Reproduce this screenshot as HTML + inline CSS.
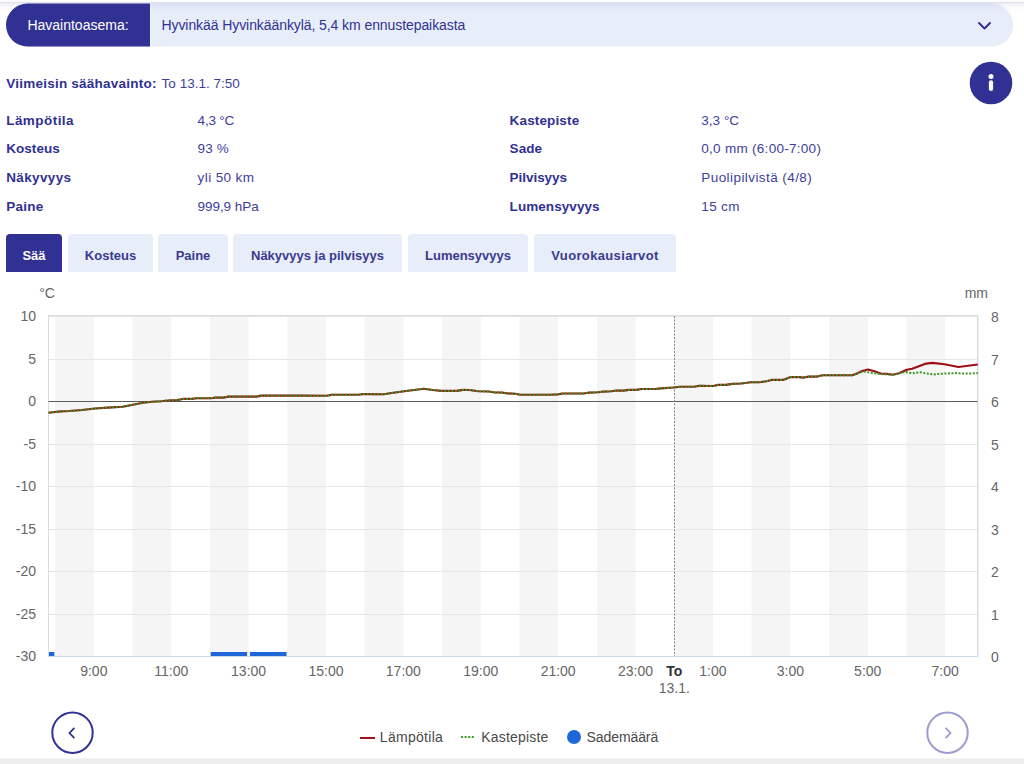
<!DOCTYPE html>
<html><head><meta charset="utf-8">
<style>
html,body{margin:0;padding:0;}
body{width:1024px;height:764px;overflow:hidden;position:relative;background:#fff;font-family:"Liberation Sans", sans-serif;}
.t{position:absolute;white-space:nowrap;}
.a{position:absolute;}
</style></head><body>
<svg class="a" style="left:0;top:0" width="1024" height="50" viewBox="0 0 1024 50"><rect x="6" y="3.6" width="1007.2" height="42.9" rx="21.45" fill="#e8eef9"/><path d="M150 3.6 H27.45 A21.45 21.45 0 0 0 27.45 46.5 H150 Z" fill="#303193"/><rect x="150" y="3.6" width="1" height="42.9" fill="#f4f6fb"/></svg>
<div class="t" style="left:27.40px;top:15.25px;font-size:14px;line-height:20px;font-weight:normal;color:#ffffff;">Havaintoasema:</div>
<div class="t" style="left:161.50px;top:15.25px;font-size:14px;line-height:20px;font-weight:normal;color:#303193;letter-spacing:-0.08px;">Hyvinkää Hyvinkäänkylä, 5,4 km ennustepaikasta</div>
<svg class="a" style="left:974px;top:15.8px" width="22" height="20" viewBox="0 0 22 20"><path d="M5 7 L10.5 12.5 L16 7" fill="none" stroke="#303193" stroke-width="2" stroke-linecap="round" stroke-linejoin="round"/></svg>
<div class="a" style="left:0;top:0;width:1024px;height:14px;background:linear-gradient(to bottom,rgba(60,60,140,0.012) 0px,rgba(60,60,140,0.012) 2px,rgba(60,60,140,0.17) 2px,rgba(60,60,140,0.12) 3px,rgba(60,60,140,0.075) 4px,rgba(60,60,140,0.045) 6px,rgba(60,60,140,0.02) 8px,rgba(60,60,140,0) 13px);"></div>
<svg class="a" style="left:965px;top:57px" width="52" height="52" viewBox="0 0 52 52"><circle cx="26" cy="26" r="21.3" fill="#303193"/><circle cx="26" cy="19.4" r="2.5" fill="#fff"/><line x1="26" y1="25.3" x2="26" y2="31.9" stroke="#fff" stroke-width="4.2" stroke-linecap="round"/></svg>
<div class="t" style="left:6.20px;top:74.12px;font-size:13.5px;line-height:19px;font-weight:bold;color:#303193;letter-spacing:0.24px;">Viimeisin säähavainto:</div>
<div class="t" style="left:161.60px;top:74.12px;font-size:13.5px;line-height:19px;font-weight:normal;color:#3e3e9c;letter-spacing:0.018px;">To 13.1. 7:50</div>
<div class="t" style="left:6.20px;top:110.82px;font-size:13.5px;line-height:19px;font-weight:bold;color:#303193;letter-spacing:0.449px;">Lämpötila</div>
<div class="t" style="left:197.60px;top:110.82px;font-size:13.5px;line-height:19px;font-weight:normal;color:#3e3e9c;letter-spacing:-0.195px;">4,3 °C</div>
<div class="t" style="left:509.60px;top:110.82px;font-size:13.5px;line-height:19px;font-weight:bold;color:#303193;letter-spacing:0.142px;">Kastepiste</div>
<div class="t" style="left:701.30px;top:110.82px;font-size:13.5px;line-height:19px;font-weight:normal;color:#3e3e9c;letter-spacing:0.022px;">3,3 °C</div>
<div class="t" style="left:6.20px;top:139.45px;font-size:13.5px;line-height:19px;font-weight:bold;color:#303193;letter-spacing:0.049px;">Kosteus</div>
<div class="t" style="left:197.60px;top:139.45px;font-size:13.5px;line-height:19px;font-weight:normal;color:#3e3e9c;letter-spacing:0.157px;">93 %</div>
<div class="t" style="left:509.60px;top:139.45px;font-size:13.5px;line-height:19px;font-weight:bold;color:#303193;letter-spacing:0.057px;">Sade</div>
<div class="t" style="left:701.30px;top:139.45px;font-size:13.5px;line-height:19px;font-weight:normal;color:#3e3e9c;letter-spacing:0.283px;">0,0 mm (6:00-7:00)</div>
<div class="t" style="left:6.20px;top:168.08px;font-size:13.5px;line-height:19px;font-weight:bold;color:#303193;letter-spacing:0.374px;">Näkyvyys</div>
<div class="t" style="left:197.60px;top:168.08px;font-size:13.5px;line-height:19px;font-weight:normal;color:#3e3e9c;letter-spacing:0.393px;">yli 50 km</div>
<div class="t" style="left:509.60px;top:168.08px;font-size:13.5px;line-height:19px;font-weight:bold;color:#303193;letter-spacing:-0.044px;">Pilvisyys</div>
<div class="t" style="left:701.30px;top:168.08px;font-size:13.5px;line-height:19px;font-weight:normal;color:#3e3e9c;letter-spacing:0.427px;">Puolipilvistä (4/8)</div>
<div class="t" style="left:6.20px;top:196.71px;font-size:13.5px;line-height:19px;font-weight:bold;color:#303193;letter-spacing:0.256px;">Paine</div>
<div class="t" style="left:197.60px;top:196.71px;font-size:13.5px;line-height:19px;font-weight:normal;color:#3e3e9c;letter-spacing:-0.061px;">999,9 hPa</div>
<div class="t" style="left:509.60px;top:196.71px;font-size:13.5px;line-height:19px;font-weight:bold;color:#303193;letter-spacing:0.064px;">Lumensyvyys</div>
<div class="t" style="left:701.30px;top:196.71px;font-size:13.5px;line-height:19px;font-weight:normal;color:#3e3e9c;letter-spacing:0.348px;">15 cm</div>
<div class="a" style="left:6px;top:234px;width:56px;height:38px;border-radius:4px 4px 0 0;background:#303193;"></div>
<div class="t" style="left:-266.00px;width:600px;text-align:center;top:246.90px;font-size:13px;line-height:18px;font-weight:bold;color:#ffffff;">Sää</div>
<div class="a" style="left:68px;top:234px;width:85px;height:38px;border-radius:4px 4px 0 0;background:#e8eef9;"></div>
<div class="t" style="left:-189.50px;width:600px;text-align:center;top:246.90px;font-size:13px;line-height:18px;font-weight:bold;color:#3a3a8f;">Kosteus</div>
<div class="a" style="left:158px;top:234px;width:70px;height:38px;border-radius:4px 4px 0 0;background:#e8eef9;"></div>
<div class="t" style="left:-107.00px;width:600px;text-align:center;top:246.90px;font-size:13px;line-height:18px;font-weight:bold;color:#3a3a8f;">Paine</div>
<div class="a" style="left:233px;top:234px;width:169px;height:38px;border-radius:4px 4px 0 0;background:#e8eef9;"></div>
<div class="t" style="left:17.50px;width:600px;text-align:center;top:246.90px;font-size:13px;line-height:18px;font-weight:bold;color:#3a3a8f;">Näkyvyys ja pilvisyys</div>
<div class="a" style="left:408px;top:234px;width:120px;height:38px;border-radius:4px 4px 0 0;background:#e8eef9;"></div>
<div class="t" style="left:168.00px;width:600px;text-align:center;top:246.90px;font-size:13px;line-height:18px;font-weight:bold;color:#3a3a8f;">Lumensyvyys</div>
<div class="a" style="left:534px;top:234px;width:142px;height:38px;border-radius:4px 4px 0 0;background:#e8eef9;"></div>
<div class="t" style="left:305.00px;width:600px;text-align:center;top:246.90px;font-size:13px;line-height:18px;font-weight:bold;color:#3a3a8f;letter-spacing:0.35px;">Vuorokausiarvot</div>
<svg class="a" style="left:0;top:0" width="1024" height="764" viewBox="0 0 1024 764"><rect x="55.10" y="316" width="38.70" height="340" fill="#f5f5f5"/><rect x="132.49" y="316" width="38.70" height="340" fill="#f5f5f5"/><rect x="209.89" y="316" width="38.70" height="340" fill="#f5f5f5"/><rect x="287.28" y="316" width="38.70" height="340" fill="#f5f5f5"/><rect x="364.68" y="316" width="38.70" height="340" fill="#f5f5f5"/><rect x="442.07" y="316" width="38.70" height="340" fill="#f5f5f5"/><rect x="519.46" y="316" width="38.70" height="340" fill="#f5f5f5"/><rect x="596.86" y="316" width="38.70" height="340" fill="#f5f5f5"/><rect x="674.25" y="316" width="38.70" height="340" fill="#f5f5f5"/><rect x="751.65" y="316" width="38.70" height="340" fill="#f5f5f5"/><rect x="829.04" y="316" width="38.70" height="340" fill="#f5f5f5"/><rect x="906.43" y="316" width="38.70" height="340" fill="#f5f5f5"/><line x1="48.5" y1="316.5" x2="977.5" y2="316.5" stroke="#e6e6e6" stroke-width="1"/><line x1="48.5" y1="359.5" x2="977.5" y2="359.5" stroke="#e6e6e6" stroke-width="1"/><line x1="48.5" y1="444.5" x2="977.5" y2="444.5" stroke="#e6e6e6" stroke-width="1"/><line x1="48.5" y1="486.5" x2="977.5" y2="486.5" stroke="#e6e6e6" stroke-width="1"/><line x1="48.5" y1="529.5" x2="977.5" y2="529.5" stroke="#e6e6e6" stroke-width="1"/><line x1="48.5" y1="571.5" x2="977.5" y2="571.5" stroke="#e6e6e6" stroke-width="1"/><line x1="48.5" y1="614.5" x2="977.5" y2="614.5" stroke="#e6e6e6" stroke-width="1"/><line x1="48.5" y1="656.5" x2="977.5" y2="656.5" stroke="#e6e6e6" stroke-width="1"/><rect x="48.5" y="315.5" width="929" height="341" fill="none" stroke="#dcdcdc" stroke-width="1"/><line x1="978.5" y1="316" x2="978.5" y2="656" stroke="#ececec" stroke-width="1"/><line x1="48.5" y1="401.5" x2="977.5" y2="401.5" stroke="#5a5a5a" stroke-width="1.2"/><line x1="48.5" y1="656.5" x2="977.5" y2="656.5" stroke="#ccd6eb" stroke-width="1"/><line x1="674.5" y1="316" x2="674.5" y2="656" stroke="#888" stroke-width="1" stroke-dasharray="2,1.5"/><rect x="49" y="652" width="5.40" height="4" fill="#1f66d6"/><rect x="210.7" y="652" width="36.40" height="4" fill="#1f66d6"/><rect x="250" y="652" width="36.60" height="4" fill="#1f66d6"/><path d="M48.5 412.7 L60.5 411.4 L69.4 411.0 L82.0 410.0 L94.8 408.5 L107.5 407.6 L122.7 406.8 L132.9 404.7 L143.0 402.8 L152.0 401.8 L160.8 401.2 L171.0 400.2 L177.6 400.1 L182.7 398.9 L191.6 398.9 L196.7 398.2 L210.6 398.2 L215.7 397.6 L223.3 397.6 L228.4 396.6 L256.3 396.6 L261.4 395.6 L300.0 395.6 L326.7 395.7 L331.8 394.8 L358.5 394.8 L363.6 394.0 L383.9 394.3 L391.5 393.0 L404.2 391.2 L422.0 389.0 L423.8 388.7 L432.7 390.0 L441.6 390.9 L456.8 390.9 L463.2 389.9 L469.5 390.0 L478.4 391.2 L488.6 391.5 L494.9 392.5 L501.2 392.5 L507.6 393.4 L515.2 393.7 L520.3 394.7 L550.0 394.7 L557.7 394.4 L562.8 393.5 L583.1 393.5 L589.4 392.6 L598.3 392.2 L603.4 391.6 L611.0 391.3 L616.1 390.6 L623.7 390.6 L628.8 389.9 L636.4 389.9 L641.5 389.0 L655.4 389.0 L660.5 388.4 L673.2 387.5 L680.2 386.7 L694.1 386.7 L699.2 385.8 L713.2 386.0 L718.2 384.9 L725.9 384.9 L732.2 383.9 L741.1 383.5 L751.2 382.2 L758.9 382.2 L766.5 381.3 L771.6 379.9 L783.0 379.9 L790.6 377.1 L800.0 377.1 L802.6 377.6 L809.0 376.6 L816.6 376.6 L822.9 375.3 L852.1 375.3 L855.9 374.0 L862.3 370.9 L868.0 369.6 L873.7 370.9 L881.3 373.8 L886.4 373.8 L892.8 374.8 L899.1 373.3 L906.7 369.7 L912.2 368.8 L926.2 363.6 L932.6 362.9 L944.5 364.2 L958.4 367.0 L977.8 364.5" fill="none" stroke="#9c0f16" stroke-width="2.1" stroke-linejoin="round"/><path d="M48.5 412.7 L60.5 411.4 L69.4 411.0 L82.0 410.0 L94.8 408.5 L107.5 407.6 L122.7 406.8 L132.9 404.7 L143.0 402.8 L152.0 401.8 L160.8 401.2 L171.0 400.2 L177.6 400.1 L182.7 398.9 L191.6 398.9 L196.7 398.2 L210.6 398.2 L215.7 397.6 L223.3 397.6 L228.4 396.6 L256.3 396.6 L261.4 395.6 L300.0 395.6 L326.7 395.7 L331.8 394.8 L358.5 394.8 L363.6 394.0 L383.9 394.3 L391.5 393.0 L404.2 391.2 L422.0 389.0 L423.8 388.7 L432.7 390.0 L441.6 390.9 L456.8 390.9 L463.2 389.9 L469.5 390.0 L478.4 391.2 L488.6 391.5 L494.9 392.5 L501.2 392.5 L507.6 393.4 L515.2 393.7 L520.3 394.7 L550.0 394.7 L557.7 394.4 L562.8 393.5 L583.1 393.5 L589.4 392.6 L598.3 392.2 L603.4 391.6 L611.0 391.3 L616.1 390.6 L623.7 390.6 L628.8 389.9 L636.4 389.9 L641.5 389.0 L655.4 389.0 L660.5 388.4 L673.2 387.5 L680.2 386.7 L694.1 386.7 L699.2 385.8 L713.2 386.0 L718.2 384.9 L725.9 384.9 L732.2 383.9 L741.1 383.5 L751.2 382.2 L758.9 382.2 L766.5 381.3 L771.6 379.9 L783.0 379.9 L790.6 377.1 L800.0 377.1 L802.6 377.6 L809.0 376.6 L816.6 376.6 L822.9 375.3 L852.1 375.3 L855.9 374.0 L863.6 371.5 L871.2 372.8 L877.5 373.8 L892.8 374.9 L899.3 373.1 L905.8 372.0 L912.2 373.4 L919.7 372.2 L926.2 373.4 L933.7 374.5 L940.2 373.8 L955.2 373.1 L965.9 373.6 L977.8 373.1" fill="none" stroke="#3c9422" stroke-width="2" stroke-dasharray="2,1.55"/></svg>
<div class="t" style="left:39.20px;top:282.75px;font-size:14px;line-height:20px;font-weight:normal;color:#666666;">°C</div>
<div class="t" style="left:964.70px;top:283.05px;font-size:14px;line-height:20px;font-weight:normal;color:#666666;">mm</div>
<div class="t" style="left:-264.00px;width:300px;text-align:right;top:306.15px;font-size:14px;line-height:20px;font-weight:normal;color:#666666;">10</div>
<div class="t" style="left:-264.00px;width:300px;text-align:right;top:349.15px;font-size:14px;line-height:20px;font-weight:normal;color:#666666;">5</div>
<div class="t" style="left:-264.00px;width:300px;text-align:right;top:391.15px;font-size:14px;line-height:20px;font-weight:normal;color:#666666;">0</div>
<div class="t" style="left:-264.00px;width:300px;text-align:right;top:434.15px;font-size:14px;line-height:20px;font-weight:normal;color:#666666;">-5</div>
<div class="t" style="left:-264.00px;width:300px;text-align:right;top:476.15px;font-size:14px;line-height:20px;font-weight:normal;color:#666666;">-10</div>
<div class="t" style="left:-264.00px;width:300px;text-align:right;top:519.15px;font-size:14px;line-height:20px;font-weight:normal;color:#666666;">-15</div>
<div class="t" style="left:-264.00px;width:300px;text-align:right;top:561.15px;font-size:14px;line-height:20px;font-weight:normal;color:#666666;">-20</div>
<div class="t" style="left:-264.00px;width:300px;text-align:right;top:604.15px;font-size:14px;line-height:20px;font-weight:normal;color:#666666;">-25</div>
<div class="t" style="left:-264.00px;width:300px;text-align:right;top:646.15px;font-size:14px;line-height:20px;font-weight:normal;color:#666666;">-30</div>
<div class="t" style="left:991.00px;top:306.65px;font-size:14px;line-height:20px;font-weight:normal;color:#666666;">8</div>
<div class="t" style="left:991.00px;top:349.65px;font-size:14px;line-height:20px;font-weight:normal;color:#666666;">7</div>
<div class="t" style="left:991.00px;top:391.65px;font-size:14px;line-height:20px;font-weight:normal;color:#666666;">6</div>
<div class="t" style="left:991.00px;top:434.65px;font-size:14px;line-height:20px;font-weight:normal;color:#666666;">5</div>
<div class="t" style="left:991.00px;top:476.65px;font-size:14px;line-height:20px;font-weight:normal;color:#666666;">4</div>
<div class="t" style="left:991.00px;top:519.65px;font-size:14px;line-height:20px;font-weight:normal;color:#666666;">3</div>
<div class="t" style="left:991.00px;top:561.65px;font-size:14px;line-height:20px;font-weight:normal;color:#666666;">2</div>
<div class="t" style="left:991.00px;top:604.65px;font-size:14px;line-height:20px;font-weight:normal;color:#666666;">1</div>
<div class="t" style="left:991.00px;top:646.65px;font-size:14px;line-height:20px;font-weight:normal;color:#666666;">0</div>
<div class="t" style="left:-206.20px;width:600px;text-align:center;top:661.35px;font-size:14px;line-height:20px;font-weight:normal;color:#666666;">9:00</div>
<div class="t" style="left:-128.81px;width:600px;text-align:center;top:661.35px;font-size:14px;line-height:20px;font-weight:normal;color:#666666;">11:00</div>
<div class="t" style="left:-51.42px;width:600px;text-align:center;top:661.35px;font-size:14px;line-height:20px;font-weight:normal;color:#666666;">13:00</div>
<div class="t" style="left:25.98px;width:600px;text-align:center;top:661.35px;font-size:14px;line-height:20px;font-weight:normal;color:#666666;">15:00</div>
<div class="t" style="left:103.37px;width:600px;text-align:center;top:661.35px;font-size:14px;line-height:20px;font-weight:normal;color:#666666;">17:00</div>
<div class="t" style="left:180.77px;width:600px;text-align:center;top:661.35px;font-size:14px;line-height:20px;font-weight:normal;color:#666666;">19:00</div>
<div class="t" style="left:258.16px;width:600px;text-align:center;top:661.35px;font-size:14px;line-height:20px;font-weight:normal;color:#666666;">21:00</div>
<div class="t" style="left:335.55px;width:600px;text-align:center;top:661.35px;font-size:14px;line-height:20px;font-weight:normal;color:#666666;">23:00</div>
<div class="t" style="left:412.95px;width:600px;text-align:center;top:661.35px;font-size:14px;line-height:20px;font-weight:normal;color:#666666;">1:00</div>
<div class="t" style="left:490.34px;width:600px;text-align:center;top:661.35px;font-size:14px;line-height:20px;font-weight:normal;color:#666666;">3:00</div>
<div class="t" style="left:567.74px;width:600px;text-align:center;top:661.35px;font-size:14px;line-height:20px;font-weight:normal;color:#666666;">5:00</div>
<div class="t" style="left:645.13px;width:600px;text-align:center;top:661.35px;font-size:14px;line-height:20px;font-weight:normal;color:#666666;">7:00</div>
<div class="t" style="left:374.25px;width:600px;text-align:center;top:661.45px;font-size:14px;line-height:20px;font-weight:bold;color:#333333;">To</div>
<div class="t" style="left:374.25px;width:600px;text-align:center;top:678.15px;font-size:14px;line-height:20px;font-weight:normal;color:#666666;">13.1.</div>
<div class="a" style="left:360px;top:737px;width:15px;height:2px;background:#a0111a;"></div>
<div class="t" style="left:379.80px;top:727.45px;font-size:14px;line-height:20px;font-weight:normal;color:#4a4a4a;letter-spacing:0.3px;">Lämpötila</div>
<svg class="a" style="left:460px;top:734px" width="16" height="6"><line x1="1" y1="3" x2="15" y2="3" stroke="#3f9f27" stroke-width="2" stroke-dasharray="2,1.6"/></svg>
<div class="t" style="left:481.30px;top:727.45px;font-size:14px;line-height:20px;font-weight:normal;color:#4a4a4a;letter-spacing:0.18px;">Kastepiste</div>
<div class="a" style="left:567px;top:729.5px;width:14px;height:14px;border-radius:50%;background:#1f66d6;"></div>
<div class="t" style="left:586.60px;top:727.45px;font-size:14px;line-height:20px;font-weight:normal;color:#4a4a4a;letter-spacing:-0.1px;">Sademäärä</div>
<svg class="a" style="left:48px;top:708px" width="50" height="50" viewBox="0 0 50 50"><circle cx="24.5" cy="24.7" r="20.2" fill="none" stroke="#303193" stroke-width="2"/><path d="M26.4 19.8 L21.5 25 L26.4 30.2" fill="none" stroke="#303193" stroke-width="1.8"/></svg>
<svg class="a" style="left:923px;top:708px" width="50" height="50" viewBox="0 0 50 50"><circle cx="24.5" cy="24.7" r="20.2" fill="none" stroke="#9b9bd0" stroke-width="2"/><path d="M22.6 19.8 L27.5 25 L22.6 30.2" fill="none" stroke="#9b9bd0" stroke-width="1.8"/></svg>
<div class="a" style="left:0;top:758px;width:1024px;height:6px;background:linear-gradient(to bottom,#f6f6f6 0px,#f6f6f6 1px,#ededed 1px);"></div>
</body></html>
